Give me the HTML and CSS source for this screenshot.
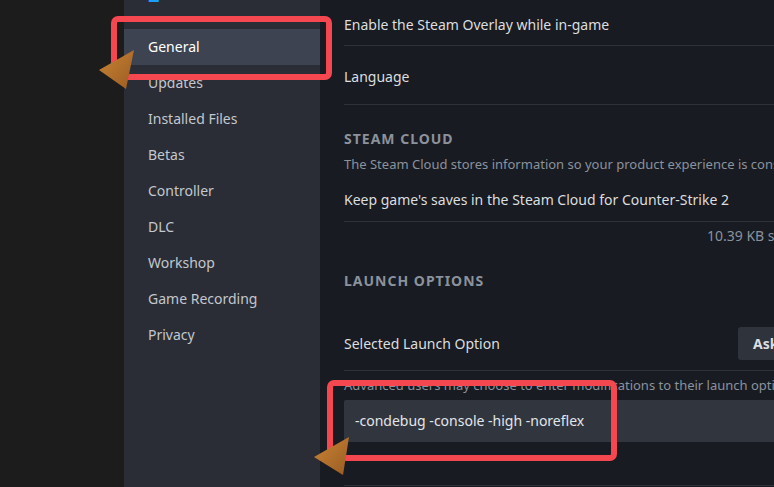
FILE: index.html
```html
<!DOCTYPE html>
<html lang="en">
<head>
<meta charset="utf-8">
<title>Properties - Counter-Strike 2</title>
<link rel="stylesheet" href="styles.css">
</head>
<body>
<div class="app">
  <div class="gutter"></div>
  <nav class="sidebar">
    <div class="game-title">Counter-Strike<br>2</div>
    <ul class="nav">
      <li class="nav-item active">General</li>
      <li class="nav-item">Updates</li>
      <li class="nav-item">Installed Files</li>
      <li class="nav-item">Betas</li>
      <li class="nav-item">Controller</li>
      <li class="nav-item">DLC</li>
      <li class="nav-item">Workshop</li>
      <li class="nav-item">Game Recording</li>
      <li class="nav-item">Privacy</li>
    </ul>
  </nav>
  <main class="main">
    <div class="content">
      <div class="row row-first"><span class="label">Enable the Steam Overlay while in-game</span></div>
      <div class="row row-lang"><span class="label">Language</span></div>

      <section class="section section-cloud">
        <h2 class="section-title">STEAM CLOUD</h2>
        <p class="section-desc">The Steam Cloud stores information so your product experience is consistent across devices.</p>
        <div class="row row-cloud"><span class="label">Keep game's saves in the Steam Cloud for Counter-Strike 2</span></div>
        <div class="cloud-usage">10.39 KB stored</div>
      </section>

      <section class="section section-launch">
        <h2 class="section-title">LAUNCH OPTIONS</h2>
        <div class="row row-select">
          <span class="label">Selected Launch Option</span>
          <button class="dropdown">Ask when starting game</button>
        </div>
        <p class="section-desc launch-desc">Advanced users may choose to enter modifications to their launch options.</p>
        <div class="launch-input">-condebug -console -high -noreflex</div>
        <div class="row row-last"></div>
      </section>
    </div>
  </main>

  <div class="callout callout-general"></div>
  <div class="callout callout-launch"></div>
  <svg class="pointer pointer-general" width="40" height="44" viewBox="0 0 40 44" aria-hidden="true">
    <defs>
      <linearGradient id="g1" x1="0" y1="0" x2="1" y2="1">
        <stop offset="0" stop-color="#c98435"/>
        <stop offset="1" stop-color="#9a5c22"/>
      </linearGradient>
    </defs>
    <polygon points="1,21 36,1 28,40" fill="url(#g1)"/>
  </svg>
  <svg class="pointer pointer-launch" width="40" height="44" viewBox="0 0 40 44" aria-hidden="true">
    <defs>
      <linearGradient id="g2" x1="0" y1="0" x2="1" y2="1">
        <stop offset="0" stop-color="#c98435"/>
        <stop offset="1" stop-color="#9a5c22"/>
      </linearGradient>
    </defs>
    <polygon points="1,21 36,1 30,39" fill="url(#g2)"/>
  </svg>
</div>
</body>
</html>
```

FILE: styles.css
```css
* { box-sizing: border-box; }

html, body {
  margin: 0;
  padding: 0;
  width: 774px;
  height: 487px;
  overflow: hidden;
  background: #181b22;
}

body {
  font-family: "Noto Sans", "Open Sans", "DejaVu Sans", sans-serif;
  font-size: 14px;
  color: #dcdedf;
}

.app {
  position: relative;
  display: flex;
  width: 774px;
  height: 487px;
  overflow: hidden;
}

.gutter {
  width: 124px;
  flex: none;
  background: #1c1c1d;
}

.sidebar {
  width: 196px;
  flex: none;
  background: #2a2d35;
}

.game-title {
  margin-top: -44px;
  margin-bottom: 20px;
  padding-left: 24px;
  height: 52px;
  line-height: 26px;
  font-size: 20px;
  font-weight: 700;
  color: #1a9fff;
  white-space: nowrap;
}

.nav {
  list-style: none;
  margin: 0;
  padding: 1px 0 0;
}

.nav-item {
  height: 36px;
  line-height: 36px;
  padding-left: 24px;
  color: #c3c7ce;
  font-size: 14px;
}

.nav-item.active {
  background: #3d4350;
  color: #ffffff;
}

.main {
  flex: 1;
  min-width: 0;
  padding-left: 24px;
}

.content {
  width: 680px;
}

.row {
  display: flex;
  align-items: center;
  border-bottom: 1px solid #2d313a;
}

.label {
  line-height: 20px;
  color: #dcdedf;
  white-space: nowrap;
}

.row-first {
  height: 46px;
  padding-top: 4px;
}

.row-lang {
  height: 59px;
  padding-top: 3px;
}

.section-title {
  margin: 0;
  font-size: 14px;
  font-weight: 700;
  letter-spacing: 1px;
  color: #8b929c;
  line-height: 20px;
}

.section-desc {
  margin: 0;
  font-size: 13px;
  line-height: 18px;
  color: #8b929c;
  white-space: nowrap;
}

.section-cloud {
  padding-top: 24px;
}

.section-cloud .section-title {
  margin-bottom: 6px;
}

.row-cloud {
  height: 49px;
  align-items: flex-start;
  padding-top: 17px;
}

.cloud-usage {
  margin-left: 363px;
  margin-top: 4px;
  line-height: 20px;
  color: #8b929c;
  white-space: nowrap;
}

.section-launch {
  padding-top: 25px;
}

.row-select {
  margin-top: 26px;
  height: 54px;
  justify-content: space-between;
}

.dropdown {
  width: 286px;
  height: 33px;
  border: 0;
  border-radius: 3px;
  background: #2f333c;
  color: #dcdedf;
  font-family: inherit;
  font-size: 14px;
  font-weight: 700;
  text-align: left;
  padding: 0 15px;
  white-space: nowrap;
}

.launch-desc {
  margin-top: 5px;
  line-height: 18px;
}

.launch-input {
  margin-top: 6px;
  height: 42px;
  line-height: 42px;
  padding-left: 11px;
  background: #31353e;
  border-radius: 2px;
  color: #e2e5e8;
  font-size: 14px;
}

.row-last {
  height: 44px;
}

/* annotation overlays */
.callout {
  position: absolute;
  border: 6px solid #f5474f;
  border-radius: 7px;
}

.callout-general {
  left: 111px;
  top: 16px;
  width: 221px;
  height: 64px;
}

.callout-launch {
  left: 327px;
  top: 380px;
  width: 290px;
  height: 81px;
}

.pointer {
  position: absolute;
}

.pointer-general {
  left: 98px;
  top: 49px;
}

.pointer-launch {
  left: 313px;
  top: 436px;
}
```
